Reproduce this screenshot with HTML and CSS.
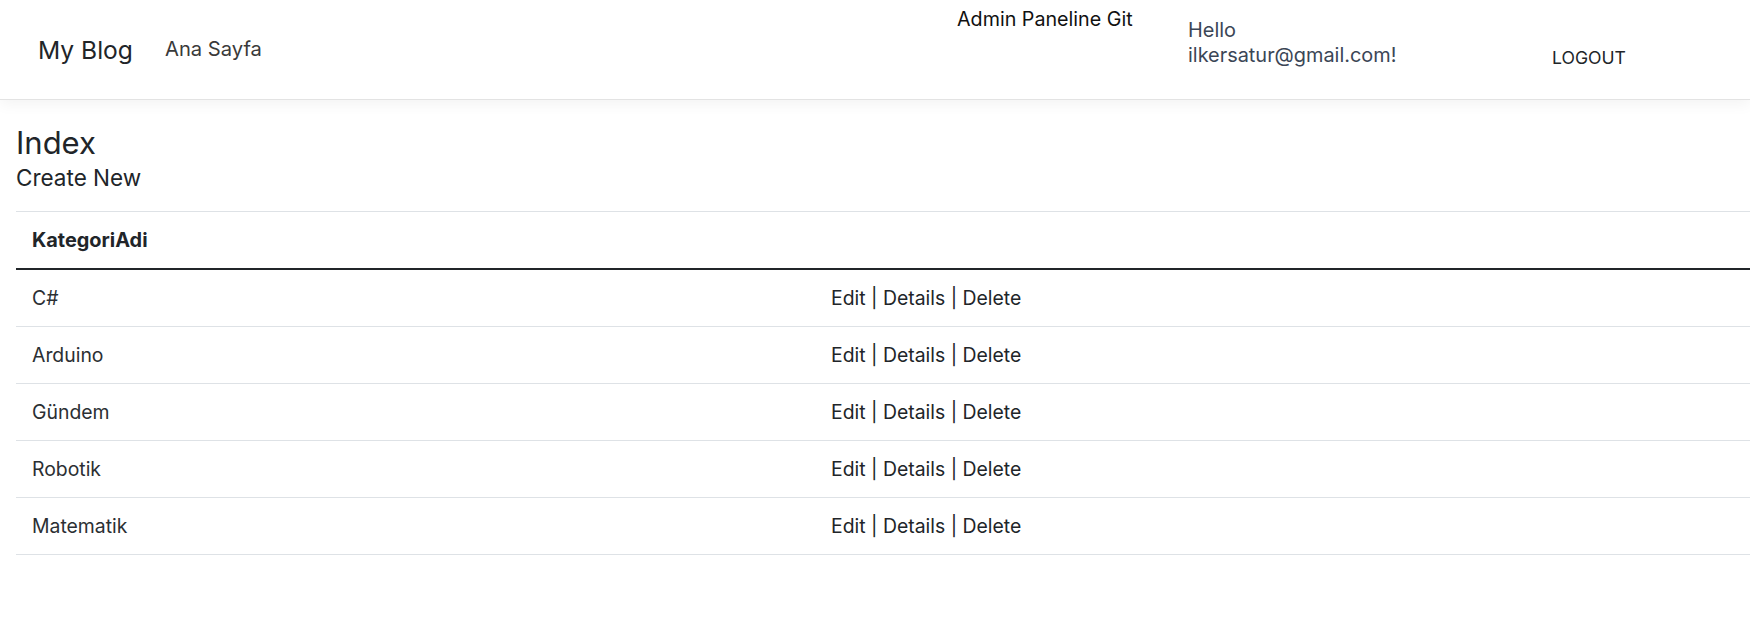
FILE: index.html
```html
<!DOCTYPE html>
<html lang="tr">
<head>
<meta charset="utf-8">
<title>Index - My Blog</title>
<link rel="stylesheet" href="styles.css">
</head>
<body>
<header class="navbar">
  <div class="nav-left">
    <a class="brand" href="#">My Blog</a>
    <a class="nav-link" href="#">Ana Sayfa</a>
  </div>
  <a class="admin-link" href="#">Admin Paneline Git</a>
  <span class="hello">Hello<br>ilkersatur@gmail.com!</span>
  <a class="logout" href="#">LOGOUT</a>
</header>
<main class="content">
  <h2 class="page-title">Index</h2>
  <p class="create"><a href="#">Create New</a></p>
  <table class="table">
    <thead>
      <tr><th class="col-name">KategoriAdi</th><th></th></tr>
    </thead>
    <tbody>
      <tr><td>C#</td><td><a href="#">Edit</a> | <a href="#">Details</a> | <a href="#">Delete</a></td></tr>
      <tr><td>Arduino</td><td><a href="#">Edit</a> | <a href="#">Details</a> | <a href="#">Delete</a></td></tr>
      <tr><td>Gündem</td><td><a href="#">Edit</a> | <a href="#">Details</a> | <a href="#">Delete</a></td></tr>
      <tr><td>Robotik</td><td><a href="#">Edit</a> | <a href="#">Details</a> | <a href="#">Delete</a></td></tr>
      <tr><td>Matematik</td><td><a href="#">Edit</a> | <a href="#">Details</a> | <a href="#">Delete</a></td></tr>
    </tbody>
  </table>
</main>
</body>
</html>
```
FILE: styles.css
```css
* { box-sizing: border-box; }
html, body { margin: 0; padding: 0; background: #fff; }
body {
  font-family: Inter, "Noto Sans", sans-serif;
  color: #212529;
  font-size: 20px;
  overflow: hidden;
}
a { color: inherit; text-decoration: none; }

.navbar {
  display: grid;
  grid-template-columns: 919px 231px 364px auto;
  align-items: start;
  height: 100px;
  padding-left: 38px;
  background: #fff;
  border-bottom: 1px solid #e3e3e3;
  box-shadow: 0 4px 14px rgba(0, 0, 0, 0.05);
  position: relative;
}
.nav-left {
  display: flex;
  align-items: baseline;
  gap: 32px;
  padding-top: 35px;
}
.brand {
  font-size: 24.6px;
  line-height: 30px;
  color: #212529;
}
.nav-link {
  font-size: 20.2px;
  line-height: 25px;
  color: #3a3a3a;
  position: relative;
  top: -3px;
}
.admin-link {
  font-size: 19.7px;
  line-height: 25px;
  margin-top: 7px;
  color: #111;
}
.hello {
  font-size: 19.9px;
  line-height: 25px;
  margin-top: 18px;
  color: #3b4656;
}
.logout {
  font-size: 17.6px;
  line-height: 25px;
  margin-top: 45px;
  color: #212529;
}

.content {
  padding: 24px 0 0 16px;
}
.page-title {
  margin: 0;
  font-size: 31px;
  font-weight: 400;
  line-height: 38px;
}
.create {
  margin: 0 0 18px;
  font-size: 22.5px;
  line-height: 31px;
}
.table {
  width: 100%;
  border-collapse: collapse;
  border-top: 1px solid #dee2e6;
}
.table th,
.table td {
  padding: 13px 16px;
  line-height: 30px;
  font-size: 19.4px;
  text-align: left;
  vertical-align: top;
  border-bottom: 1px solid #dee2e6;
}
.table th {
  font-weight: 700;
  font-size: 19.9px;
  border-bottom: 2px solid #212529;
}
.table .col-name { width: 799px; }
.table td:first-child { color: #2b2f33; }
```
